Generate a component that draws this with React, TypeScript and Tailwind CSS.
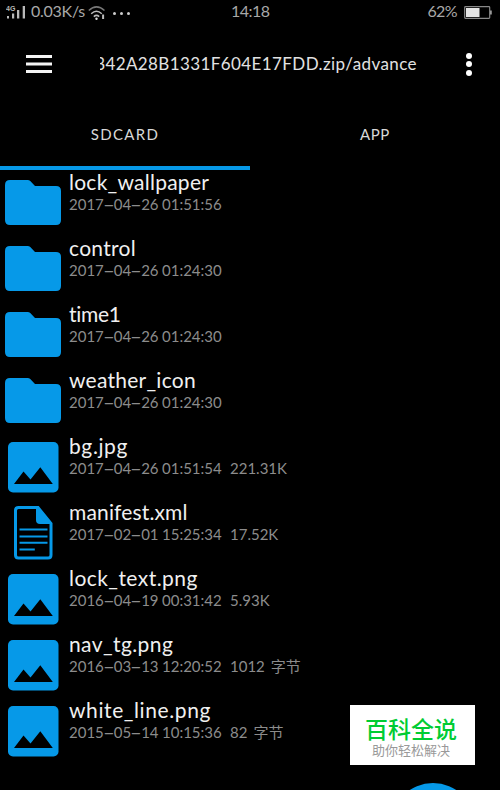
import clsx from "clsx";
import { Fragment } from "react";

type FileKind = "folder" | "image" | "document";

interface FileEntry {
  name: string;
  kind: FileKind;
  date: string;
  time: string;
  size?: string;
  unit?: string;
  tracking: string;
}

const files: FileEntry[] = [
  { name: "lock_wallpaper", kind: "folder", date: "2017-04-26", time: "01:51:56", tracking: "tracking-[0.25px]" },
  { name: "control", kind: "folder", date: "2017-04-26", time: "01:24:30", tracking: "tracking-[0.3px]" },
  { name: "time1", kind: "folder", date: "2017-04-26", time: "01:24:30", tracking: "tracking-[-0.3px]" },
  { name: "weather_icon", kind: "folder", date: "2017-04-26", time: "01:24:30", tracking: "tracking-[0.25px]" },
  { name: "bg.jpg", kind: "image", date: "2017-04-26", time: "01:51:54", size: "221.31K", tracking: "tracking-[0.6px]" },
  { name: "manifest.xml", kind: "document", date: "2017-02-01", time: "15:25:34", size: "17.52K", tracking: "tracking-[0.15px]" },
  { name: "lock_text.png", kind: "image", date: "2016-04-19", time: "00:31:42", size: "5.93K", tracking: "tracking-[0.45px]" },
  { name: "nav_tg.png", kind: "image", date: "2016-03-13", time: "12:20:52", size: "1012", unit: "字节", tracking: "tracking-[0.4px]" },
  { name: "white_line.png", kind: "image", date: "2015-05-14", time: "10:15:36", size: "82", unit: "字节", tracking: "tracking-[0.6px]" },
];

const FolderIcon = () => (
  <svg className="absolute left-[5px] top-3 h-[45px] w-14" viewBox="0 0 56 45" fill="#0699e8">
    <path d="M5 0h17.5q1.7 0 2.8 1.1L30 6h21q5 0 5 5v29q0 5-5 5H5q-5 0-5-5V5q0-5 5-5z" />
  </svg>
);

const ImageIcon = () => (
  <svg className="absolute left-2 top-[9.5px] h-[51px] w-[51px]" viewBox="0 0 51 51">
    <rect width="50.5" height="50.5" rx="5" fill="#0699e8" />
    <path d="M6 42 15.5 29.5l7 8L32.3 25.3 44.8 42z" fill="#000" />
  </svg>
);

const DocumentIcon = () => (
  <svg className="absolute left-[14px] top-2 h-[54px] w-[39px]" viewBox="0 0 39 54" fill="none" stroke="#0699e8">
    <path d="M4.5 1.5H24L37 17.5V49q0 3-3 3H4.5q-3 0-3-3V4.5q0-3 3-3z" strokeWidth="3" />
    <path d="M22 1h2.5L38 18H26q-4 0-4-4z" fill="#0699e8" stroke="none" />
    <path d="M5.5 23.6h28M5.5 30.5h28M5.5 36.8h28M5.5 43.4h15.3" strokeWidth="2" />
  </svg>
);

const icons = { folder: FolderIcon, image: ImageIcon, document: DocumentIcon };

const SignalIcon = () => (
  <svg className="h-4 w-5" viewBox="0 0 20 16" fill="#b8b8b8">
    <text x="0" y="7" fontSize="7" fontFamily="Liberation Sans, sans-serif" fontWeight="700">4G</text>
    <path d="M1 12h2v2.5H1zM6 9.5h2.2v5H6zM11 6h2.3v8.5H11zM16.7 2H19v12.5h-2.3z" />
  </svg>
);

const WifiIcon = () => (
  <svg className="h-4 w-[18px]" viewBox="0 0 18 16" fill="none" stroke="#bcbcbc" strokeWidth="1.5">
    <path d="M.8 5.5Q8.5-1.8 16.5 5.5" stroke="#777" />
    <path d="M3.2 8.7q5.2-4.8 10.6 0M5.8 11.6q2.7-2.4 5.4 0" />
    <circle cx="8.5" cy="13.7" r="1.2" fill="#ddd" stroke="none" />
    <path d="M15.1 9.5V14" strokeWidth="2" />
  </svg>
);

const StatusBar = () => (
  <div className="relative flex h-6 items-center pl-1.5 pr-2 text-base leading-6 text-[#a8a8a8]">
    <SignalIcon />
    <span className="-mt-0.5 ml-[5px] w-[56px] whitespace-nowrap tracking-[-0.25px]">0.03K/s</span>
    <span className="ml-[1px] mt-0.5"><WifiIcon /></span>
    <span className="ml-[7px] mt-0.5 flex gap-1">
      <i className="h-[3px] w-[3px] rounded-full bg-[#ccc]" />
      <i className="h-[3px] w-[3px] rounded-full bg-[#ccc]" />
      <i className="h-[3px] w-[3px] rounded-full bg-[#ccc]" />
    </span>
    <span className="absolute -top-px left-[231px] tracking-[-0.5px]">14:18</span>
    <span className="-mt-0.5 ml-auto mr-[7px] tracking-[-0.6px]">62%</span>
    <svg className="h-[13px] w-7" viewBox="0 0 28 13">
      <rect x=".7" y=".7" width="25" height="11.6" rx=".8" fill="none" stroke="#888" strokeWidth="1.2" />
      <path d="M2 2h13.5v9H2z" fill="#e4e4e4" />
      <path d="M26 4.5h1.8v4H26z" fill="#999" />
    </svg>
  </div>
);

const Toolbar = () => (
  <header className="flex h-20 items-center pl-[26px] pr-7">
    <svg className="h-[18px] w-[26px]" viewBox="0 0 26 18" fill="#f5f5f5">
      <path d="M0 0h26v3H0zM0 7.6h26v3H0zM0 15h26v3H0z" />
    </svg>
    <h1 className="ml-12 flex w-[317px] justify-end overflow-hidden whitespace-nowrap text-[17px] tracking-[0.4px] text-[#e2e2e2]">
      842A28B1331F604E17FDD.zip/advance
    </h1>
    <div className="ml-auto flex flex-col gap-[2.5px]">
      <span className="h-[6px] w-[6px] rounded-full bg-white" />
      <span className="h-[6px] w-[6px] rounded-full bg-white" />
      <span className="h-[6px] w-[6px] rounded-full bg-white" />
    </div>
  </header>
);

const Tabs = () => (
  <nav className="grid h-[66px] grid-cols-2 text-center text-[15px] leading-[60px] text-[#d8d8d8]">
    <div className="border-b-4 border-[#0699e8] tracking-[1.3px]">SDCARD</div>
    <div className="tracking-[0.6px]">APP</div>
  </nav>
);

// The dashes of a date are as wide as its digits.
const DateText = ({ value }: { value: string }) => (
  <span>
    {value.split("-").map((part, i) => (
      <Fragment key={i}>
        {i > 0 && <span className="mx-[2.2px] inline-block scale-x-[2.2]">-</span>}
        {part}
      </Fragment>
    ))}
  </span>
);

const FileRow = ({ file }: { file: FileEntry }) => {
  const Icon = icons[file.kind];
  return (
    <li className="relative h-[66px] pl-[69px] pt-0.5">
      <Icon />
      <p className={clsx("h-6 text-[21px] leading-6 text-[#f0f0f0]", file.tracking)}>{file.name}</p>
      <p className="flex h-5 whitespace-nowrap text-[15px] leading-[21px] text-[#8c8c8c]">
        <span className="w-[93px]"><DateText value={file.date} /></span>
        <span className="w-[68px]">{file.time}</span>
        {file.size && <span>{file.size}</span>}
        {file.unit && <span className="ml-[6px]">{file.unit}</span>}
      </p>
    </li>
  );
};

const App = () => {
  return (
    <main className="relative h-[790px] w-[500px] overflow-hidden bg-black font-['Lato','Noto_Sans_CJK_SC',sans-serif] [font-variant-ligatures:none]">
      <StatusBar />
      <Toolbar />
      <Tabs />
      <ul className="-mt-0.5">
        {files.map((file) => (
          <FileRow key={file.name} file={file} />
        ))}
      </ul>
      <div className="absolute left-[391px] top-[783px] h-[84px] w-[84px] rounded-full bg-[#0699e8]" />
      <div className="absolute left-[350px] top-[705px] flex h-[60px] w-[125px] flex-col items-center bg-white pr-[3px]">
        <p className="mt-[10px] text-[23px] font-medium leading-7 text-[#0c3]">百科全说</p>
        <p className="text-[13px] leading-[15px] text-[#999]">助你轻松解决</p>
      </div>
    </main>
  );
};

export default App;
